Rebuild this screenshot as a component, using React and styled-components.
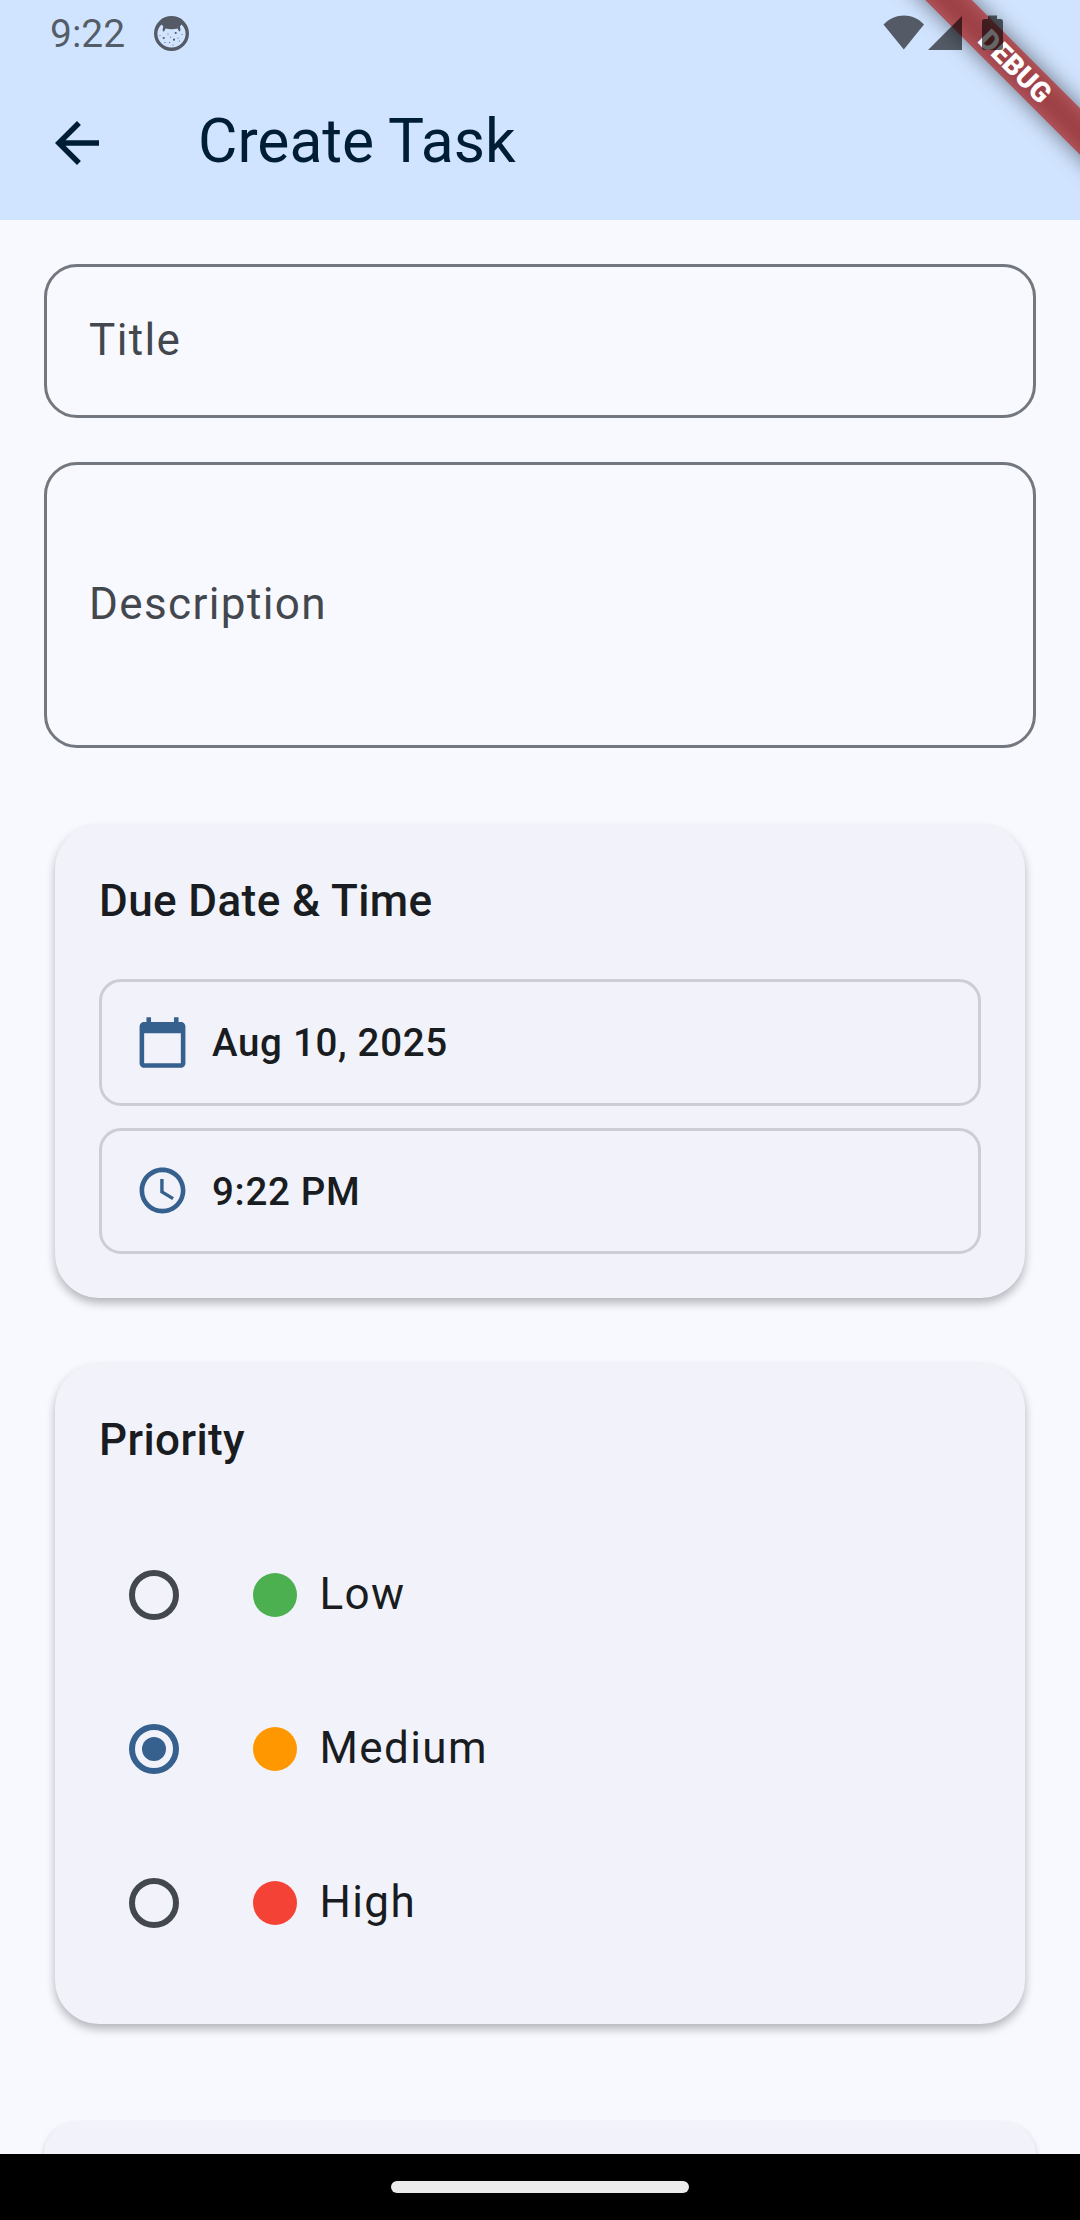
import React from "react";
import styled, { createGlobalStyle, css } from "styled-components";

const GlobalStyle = createGlobalStyle`
  *, *::before, *::after { box-sizing: border-box; }
  body { margin: 0; background: #f8f9ff; font-family: Roboto, "Liberation Sans", sans-serif; }
`;

const Screen = styled.div`
  position: relative;
  display: flex;
  flex-direction: column;
  width: 1080px;
  height: 2220px;
  overflow: hidden;
  background: #f8f9ff;
  color: #191c20;
`;

const Header = styled.header`
  flex: none;
  height: 220px;
  background: #d1e4ff;
`;

const StatusBar = styled.div`
  position: relative;
  z-index: 2;
  display: flex;
  align-items: center;
  height: 66px;
  padding: 0 75px 0 50px;
  color: rgba(0, 0, 0, 0.6);
`;

const Clock = styled.span`
  font-size: 39px;
  line-height: 64px;
  padding-top: 2px;
  margin-right: 29px;
`;

const StatusIcons = styled.div`
  display: flex;
  align-items: center;
  margin-left: auto;
`;

const AppBar = styled.div`
  display: flex;
  align-items: center;
  height: 154px;
  padding-left: 44px;
  gap: 88px;
  color: #001d36;
`;

const PageTitle = styled.h1`
  margin: 0;
  padding-bottom: 4px;
  font-size: 60.5px;
  font-weight: 400;
  line-height: 77px;
`;

const DebugBanner = styled.div`
  position: absolute;
  z-index: 1;
  top: 0;
  right: 0;
  width: 220px;
  height: 220px;
  overflow: hidden;
`;

const DebugRibbon = styled.div`
  position: absolute;
  top: 50px;
  left: -45px;
  width: 400px;
  height: 33px;
  transform: rotate(45deg);
  color: #fff;
  font-size: 28px;
  font-weight: 900;
  line-height: 33px;
  text-align: center;

  &::before,
  &::after {
    content: "";
    position: absolute;
    inset: 0;
    z-index: -1;
  }
  &::before {
    background: rgba(0, 0, 0, 0.5);
    filter: blur(11px);
  }
  &::after {
    background: rgba(183, 28, 28, 0.627);
  }
`;

const Form = styled.main`
  flex: 1;
  min-height: 0;
  display: flex;
  flex-direction: column;
  padding: 44px 44px 0;
  overflow: hidden;
`;

const Field = styled.div`
  flex: none;
  display: flex;
  align-items: center;
  height: ${(p) => p.$height}px;
  margin-bottom: ${(p) => p.$gap}px;
  padding: 0 42px 2px;
  border: 3px solid #73777f;
  border-radius: 33px;
  color: #43474e;
  font-size: 44px;
  line-height: 66px;
  letter-spacing: 1.375px;
`;

const Card = styled.section`
  flex: none;
  display: flex;
  flex-direction: column;
  margin: ${(p) => (p.$wide ? "43px 0 0" : "11px 11px 55px")};
  padding: 44px;
  border-radius: ${(p) => (p.$wide ? 33 : 44)}px;
  background: #f2f3fa;
  box-shadow: ${(p) =>
    p.$wide ? "0 3px 6px rgba(0, 0, 0, 0.2)" : "0 5px 10px rgba(0, 0, 0, 0.28)"};
`;

const CardTitle = styled.h2`
  margin: 0 0 44px;
  padding-bottom: 2px;
  font-size: 44px;
  font-weight: 500;
  line-height: 64px;
  letter-spacing: 0.41px;
`;

const PickerList = styled.div`
  display: flex;
  flex-direction: column;
  gap: 22px;
`;

const Picker = styled.button`
  display: flex;
  align-items: center;
  gap: 22px;
  width: 100%;
  height: 126.5px;
  padding: 0 33px;
  border: 3px solid #ccced5;
  border-radius: 22px;
  background: none;
  color: #191c20;
  font: 500 38.5px/55px Roboto, sans-serif;
  letter-spacing: 0.69px;
  svg { color: #36618e; flex: none; }
`;

const PickerValue = styled.span`
  padding-top: 1px;
`;

const Option = styled.label`
  display: flex;
  align-items: center;
  height: 154px;
  padding-left: 30px;
`;

const OptionLabel = styled.span`
  padding-bottom: 2px;
  font-size: 44px;
  line-height: 66px;
  letter-spacing: 1.375px;
`;

const Radio = styled.span`
  display: grid;
  place-items: center;
  width: 50px;
  height: 50px;
  margin-right: 74px;
  border: 6px solid #43474e;
  border-radius: 50%;
  ${(p) =>
    p.$checked &&
    css`
      border-color: #36618e;
      &::after {
        content: "";
        width: 24px;
        height: 24px;
        border-radius: 50%;
        background: #36618e;
      }
    `}
`;

const Swatch = styled.span`
  width: 44px;
  height: 44px;
  margin-right: 22.5px;
  border-radius: 50%;
  background: ${(p) => p.$color};
`;

const NavBar = styled.footer`
  flex: none;
  display: flex;
  align-items: center;
  justify-content: center;
  height: 66px;
  background: #000;
`;

const NavHandle = styled.span`
  width: 298px;
  height: 12px;
  border-radius: 6px;
  background: #ebebeb;
`;

const CatIcon = () => (
  <svg width="35" height="35" viewBox="0 0 35 35" fill="currentColor">
    <path
      fillRule="evenodd"
      d="M17.500 0A17.500 17.500 0 1 1 17.500 35A17.500 17.500 0 1 1 17.500 0ZM7.500 8.500C4.800 11 3.400 14 3.400 17.500A14.100 14.100 0 0 0 31.600 17.500C31.600 14 30.200 11 27.500 8.500L26 10.500L26.500 14L25.300 15.800L23.500 12.500C19.500 13.500 15.500 13.500 11.500 12.500L10 15.800L8.500 14.500L9.300 10.500Z"
    />
    <circle cx="21.700" cy="17" r="1.100" />
    <circle cx="9.700" cy="22" r="1.100" />
    <circle cx="20" cy="23.700" r="1.100" />
    <circle cx="14" cy="18" r=".6" />
    <circle cx="6" cy="19.500" r=".5" />
    <circle cx="16.500" cy="21" r=".6" />
    <circle cx="24" cy="22" r=".6" />
    <circle cx="28" cy="18.500" r=".6" />
    <circle cx="15.500" cy="26.500" r=".6" />
    <circle cx="19" cy="29" r=".6" />
    <circle cx="25.500" cy="25" r=".6" />
    <circle cx="11" cy="26.500" r=".6" />
  </svg>
);

const SignalIcons = () => (
  <svg width="122" height="36" viewBox="0 0 122 36" fill="currentColor">
    <path d="M0.500 9.500C12 -2.500 30 -2.500 41 9.500L20.800 34.500Z" />
    <path d="M45 35L79 1V35Z" />
    <path d="M105 0.500H114V4H117.500A2.500 2.500 0 0 1 120 6.500V32.500A2.500 2.500 0 0 1 117.500 35H101.500A2.500 2.500 0 0 1 99 32.500V6.500A2.500 2.500 0 0 1 101.500 4H105Z" />
  </svg>
);

const BackIcon = () => (
  <svg width="66" height="66" viewBox="0 0 24 24" fill="currentColor">
    <path d="M20 11H7.830l5.590-5.590L12 4l-8 8 8 8 1.410-1.410L7.830 13H20v-2z" />
  </svg>
);

const CalendarIcon = () => (
  <svg width="55" height="55" viewBox="0 0 24 24" fill="currentColor">
    <path d="M20 3h-1V1h-2v2H7V1H5v2H4c-1.100 0-2 .9-2 2v16c0 1.100.9 2 2 2h16c1.100 0 2-.9 2-2V5c0-1.100-.9-2-2-2zm0 18H4V8h16v13z" />
  </svg>
);

const TimeIcon = () => (
  <svg width="55" height="55" viewBox="0 0 24 24" fill="currentColor">
    <path d="M11.990 2C6.470 2 2 6.480 2 12s4.470 10 9.990 10C17.520 22 22 17.520 22 12S17.520 2 11.990 2zM12 20c-4.420 0-8-3.580-8-8s3.580-8 8-8 8 3.580 8 8-3.580 8-8 8zm.5-13H11v6l5.250 3.150.75-1.230-4.500-2.670z" />
  </svg>
);

const priorities = [
  { label: "Low", color: "#4caf50" },
  { label: "Medium", color: "#ff9800", checked: true },
  { label: "High", color: "#f44336" },
];

export default function App() {
  return (
    <Screen>
      <GlobalStyle />
      <Header>
        <StatusBar>
          <Clock>9:22</Clock>
          <CatIcon />
          <StatusIcons>
            <SignalIcons />
          </StatusIcons>
        </StatusBar>
        <AppBar>
          <BackIcon />
          <PageTitle>Create Task</PageTitle>
        </AppBar>
      </Header>
      <DebugBanner>
        <DebugRibbon>DEBUG</DebugRibbon>
      </DebugBanner>
      <Form>
        <Field $height={154} $gap={44}>Title</Field>
        <Field $height={286} $gap={66}>Description</Field>
        <Card>
          <CardTitle>Due Date &amp; Time</CardTitle>
          <PickerList>
            <Picker>
              <CalendarIcon />
              <PickerValue>Aug 10, 2025</PickerValue>
            </Picker>
            <Picker>
              <TimeIcon />
              <PickerValue>9:22 PM</PickerValue>
            </Picker>
          </PickerList>
        </Card>
        <Card>
          <CardTitle>Priority</CardTitle>
          {priorities.map((p) => (
            <Option key={p.label}>
              <Radio $checked={p.checked} />
              <Swatch $color={p.color} />
              <OptionLabel>{p.label}</OptionLabel>
            </Option>
          ))}
        </Card>
        <Card $wide />
      </Form>
      <NavBar>
        <NavHandle />
      </NavBar>
    </Screen>
  );
}
